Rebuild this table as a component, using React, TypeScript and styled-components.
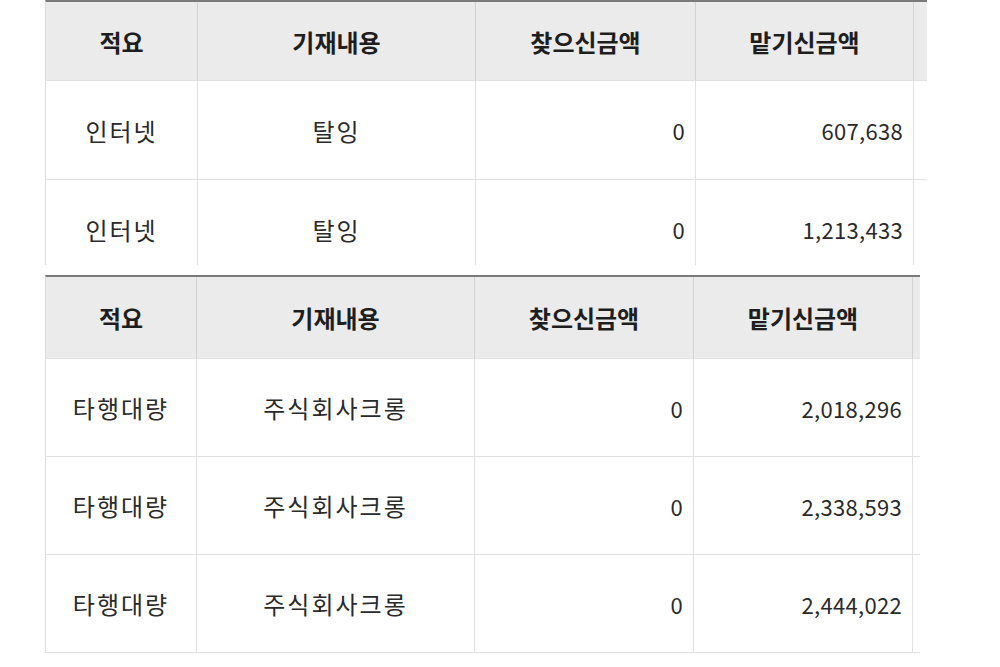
import * as React from "react";
import styled, { createGlobalStyle } from "styled-components";

const GlobalStyle = createGlobalStyle`
  html, body {
    margin: 0;
    padding: 0;
    background: #ffffff;
  }
  body {
    font-family: "Noto Sans CJK KR", "Noto Sans", sans-serif;
    color: #222;
  }
`;

const Page = styled.div`
  display: flex;
  flex-direction: column;
  gap: 10px;
  padding-left: 45px;
  width: 1000px;
  height: 667px;
  box-sizing: border-box;
  overflow: hidden;
`;

// a ledger snapshot, cut at the edges like the captured screen
const Frame = styled.div<{ $w: number; $h?: number }>`
  width: ${(p) => p.$w}px;
  height: ${(p) => (p.$h ? `${p.$h}px` : "auto")};
  overflow: hidden;
  flex: none;
`;

const Grid = styled.div<{ $cols: string; $head: number; $row: number }>`
  display: grid;
  grid-template-columns: ${(p) => p.$cols};
  grid-auto-rows: ${(p) => p.$row}px;
  grid-template-rows: ${(p) => p.$head}px;
  border-top: 2px solid #7a7a7a;
  border-left: 1px solid #dcdcdc;
  width: max-content;
`;

const HeadCell = styled.div`
  display: flex;
  align-items: center;
  justify-content: center;
  background: #ebebeb;
  border-right: 1px solid #d2d2d2;
  border-bottom: 1px solid #e2e2e2;
  font-size: 24px;
  font-weight: 700;
  color: #1e1e1e;
  letter-spacing: 0;
`;

const Cell = styled.div<{ $num?: boolean }>`
  display: flex;
  align-items: center;
  justify-content: ${(p) => (p.$num ? "flex-end" : "center")};
  padding: 0 10px;
  border-right: 1px solid #e2e2e2;
  border-bottom: 1px solid #e2e2e2;
  font-size: ${(p) => (p.$num ? "22px" : "24px")};
  letter-spacing: ${(p) => (p.$num ? "0.3px" : "2px")};
  color: #2a2a2a;
`;

interface Entry {
  summary: string;
  memo: string;
  out: string;
  in: string;
}

const headers = ["적요", "기재내용", "찾으신금액", "맡기신금액", ""];

const first: Entry[] = [
  { summary: "인터넷", memo: "탈잉", out: "0", in: "607,638" },
  { summary: "인터넷", memo: "탈잉", out: "0", in: "1,213,433" },
];

const second: Entry[] = [
  { summary: "타행대량", memo: "주식회사크롱", out: "0", in: "2,018,296" },
  { summary: "타행대량", memo: "주식회사크롱", out: "0", in: "2,338,593" },
  { summary: "타행대량", memo: "주식회사크롱", out: "0", in: "2,444,022" },
];

interface LedgerProps {
  cols: string;
  head: number;
  row: number;
  rows: Entry[];
}

const Ledger: React.FC<LedgerProps> = ({ cols, head, row, rows }) => (
  <Grid $cols={cols} $head={head} $row={row}>
    {headers.map((h, i) => (
      <HeadCell key={i}>{h}</HeadCell>
    ))}
    {rows.map((r, i) => (
      <React.Fragment key={i}>
        <Cell>{r.summary}</Cell>
        <Cell>{r.memo}</Cell>
        <Cell $num>{r.out}</Cell>
        <Cell $num>{r.in}</Cell>
        <Cell />
      </React.Fragment>
    ))}
  </Grid>
);

export default function App() {
  return (
    <>
      <GlobalStyle />
      <Page>
        <Frame $w={882} $h={265}>
          <Ledger cols="152px 278px 220px 218px 120px" head={79} row={99} rows={first} />
        </Frame>
        <Frame $w={875}>
          <Ledger cols="151px 278px 219px 219px 120px" head={82} row={98} rows={second} />
        </Frame>
      </Page>
    </>
  );
}
